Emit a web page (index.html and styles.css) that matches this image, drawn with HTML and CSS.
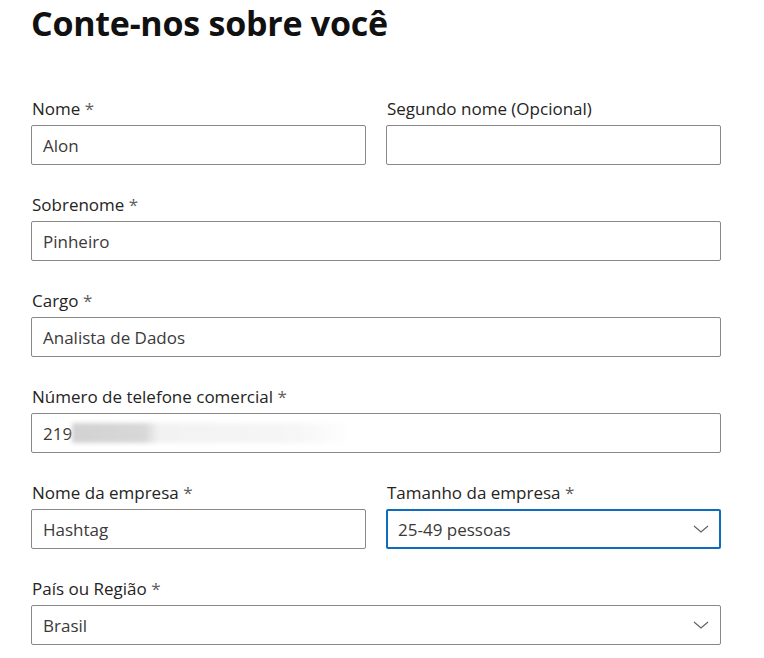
FILE: index.html
```html
<!DOCTYPE html>
<html lang="pt-BR">
<head>
<meta charset="utf-8">
<title>Conte-nos sobre você</title>
<link rel="stylesheet" href="styles.css">
</head>
<body>
<main class="page">
  <h1 class="title">Conte-nos sobre você</h1>
  <form class="form">
    <div class="row two">
      <div class="field">
        <label class="label">Nome <span class="req">*</span></label>
        <div class="input"><span class="value">Alon</span></div>
      </div>
      <div class="field">
        <label class="label">Segundo nome (Opcional)</label>
        <div class="input"></div>
      </div>
    </div>
    <div class="row">
      <div class="field">
        <label class="label">Sobrenome <span class="req">*</span></label>
        <div class="input"><span class="value">Pinheiro</span></div>
      </div>
    </div>
    <div class="row">
      <div class="field">
        <label class="label">Cargo <span class="req">*</span></label>
        <div class="input"><span class="value">Analista de Dados</span></div>
      </div>
    </div>
    <div class="row">
      <div class="field">
        <label class="label">Número de telefone comercial <span class="req">*</span></label>
        <div class="input"><span class="value">219</span><span class="blur"></span></div>
      </div>
    </div>
    <div class="row two">
      <div class="field">
        <label class="label">Nome da empresa <span class="req">*</span></label>
        <div class="input"><span class="value">Hashtag</span></div>
      </div>
      <div class="field">
        <label class="label">Tamanho da empresa <span class="req">*</span></label>
        <div class="input select focused"><span class="value">25-49 pessoas</span>
          <svg class="chev" width="16" height="8" viewBox="0 0 16 8"><path d="M1 1 L8 7 L15 1" fill="none" stroke="#605e5c" stroke-width="1.1"/></svg>
        </div>
      </div>
    </div>
    <div class="row">
      <div class="field">
        <label class="label">País ou Região <span class="req">*</span></label>
        <div class="input select"><span class="value">Brasil</span>
          <svg class="chev" width="16" height="8" viewBox="0 0 16 8"><path d="M1 1 L8 7 L15 1" fill="none" stroke="#605e5c" stroke-width="1.1"/></svg>
        </div>
      </div>
    </div>
  </form>
</main>
</body>
</html>
```

FILE: styles.css
```css
* { box-sizing: border-box; }
html, body { margin: 0; padding: 0; background: #ffffff; }
body {
  font-family: "Open Sans", "Noto Sans", "Liberation Sans", sans-serif;
  color: #323130;
}
.page {
  padding: 0 43px 0 31px;
  width: 764px;
}
.title {
  margin: 0;
  font-size: 34px;
  font-weight: 700;
  line-height: 46px;
  color: #111111;
  letter-spacing: -0.25px;
}
.form {
  margin-top: 52px;
  display: flex;
  flex-direction: column;
  gap: 29px;
}
.row {
  display: grid;
  grid-template-columns: 1fr;
  gap: 20px;
}
.row.two { grid-template-columns: 1fr 1fr; }
.field { display: flex; flex-direction: column; }
.label {
  font-size: 17px;
  line-height: 22px;
  margin-bottom: 5px;
  color: #252423;
  padding-left: 1px;
}
.req { color: #605e5c; }
.input {
  height: 40px;
  border: 1px solid #8a8886;
  border-radius: 2px;
  display: flex;
  align-items: center;
  padding: 0 11px;
  font-size: 17px;
  color: #3b3a39;
  position: relative;
}
.input.focused {
  border: 2px solid #0f6cbd;
  padding: 0 10px;
}
.select { justify-content: space-between; }
.blur {
  display: inline-block;
  height: 20px;
  width: 280px;
  margin-left: 0;
  background: linear-gradient(90deg, #d2d2d2 0%, #d8d8d8 26%, #f2f2f2 31%, #f6f6f6 80%, #ffffff 100%);
  filter: blur(2px);
}
```
